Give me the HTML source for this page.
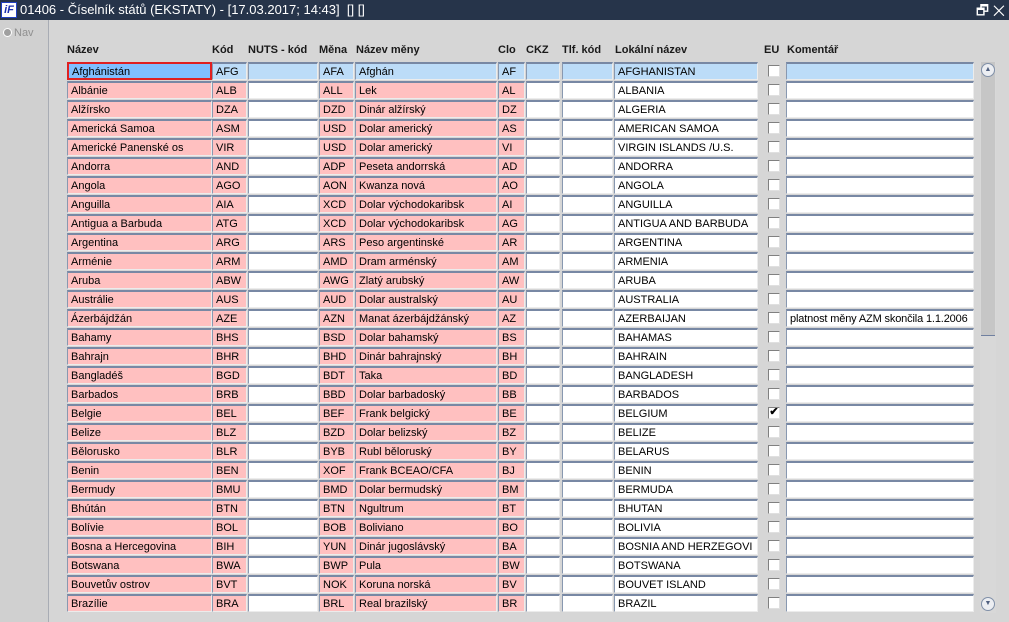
<!DOCTYPE html>
<html><head><meta charset="utf-8"><style>
*{box-sizing:border-box;margin:0;padding:0}
body{width:1009px;height:622px;overflow:hidden;background:#d6d6d6;font-family:"Liberation Sans",Arial,sans-serif;font-size:11px;color:#000;position:relative}
.tb{position:absolute;left:0;top:0;width:1009px;height:20px;background:#26344a;color:#fff;font-size:13px;line-height:20px;padding-left:20px;white-space:nowrap}
.logo{position:absolute;left:1px;top:2px;width:16px;height:16px;background:#fff;border:1px solid #2040c0;color:#1a2fb0;font-weight:bold;font-style:italic;font-size:11px;line-height:14px;text-align:center}
.side{position:absolute;left:0;top:20px;width:49px;height:602px;background:#d0d0d0;border-right:1px solid #a8acb4}
.nav{position:absolute;left:3px;top:27px;color:#909090;font-size:11px}
.nav i{display:inline-block;width:9px;height:9px;border-radius:50%;background:#a0a0a0;border:1px solid #fff;vertical-align:-1px;margin-right:2px}
.h{position:absolute;top:44px;font-weight:bold;font-size:11px;color:#1a1a1a}
.r{position:absolute;left:0;height:18px;width:1000px}
.r span{position:absolute;top:0;height:18px;line-height:16px;padding-left:3px;white-space:nowrap;overflow:hidden;background:#fff;border-top:2px solid #7888a4;border-left:1px solid #8898b0;border-bottom:1px solid #ececec;border-right:1px solid #ececec}
.r .p{background:#ffc0c0}
.a{left:67px;width:145px}.b{left:212px;width:35px}.c{left:248px;width:70px}.d{left:319px;width:35px}.e{left:355px;width:142px}.f{left:498px;width:27px}.g{left:526px;width:34px}.hh{left:562px;width:51px}.i{left:614px;width:144px}.k{left:786px;width:188px;letter-spacing:-0.15px}
.r .j{left:768px;top:3px;width:12px;height:12px;padding:0;background:#fff;border:1px solid #808080;border-right-color:#e0e0e0;border-bottom-color:#e0e0e0;font-size:11px;line-height:9px;text-align:center;font-weight:bold}
.r0 span{background:#bcdcf8}
.r0 .a{background:#80bfff;border:2px solid #e02020}
.sb{position:absolute;left:980px;top:62px;width:16px;height:551px;background:#d8d8d8}
.th{position:absolute;left:981px;top:62px;width:14px;height:274px;background:#c6c6c6;border-bottom:1px solid #7080a0}
.ar{position:absolute;left:981px;width:14px;height:14px;border-radius:7px;border:1px solid #8090a8;background:#eceef2;font-size:7px;line-height:12px;text-align:center;color:#506080}
</style></head><body>
<div class="tb"><div class="logo">iF</div>01406 - Číselník států (EKSTATY) - [17.03.2017; 14:43]&nbsp; [] []<span style="position:absolute;right:4px;top:0;font-size:14px">🗗 ✕</span></div>
<div class="side"></div>
<div class="nav"><i></i>Nav</div>
<div class="h" style="left:67px">Název</div><div class="h" style="left:212px">Kód</div><div class="h" style="left:248px">NUTS - kód</div><div class="h" style="left:319px">Měna</div><div class="h" style="left:356px">Název měny</div><div class="h" style="left:498px">Clo</div><div class="h" style="left:526px">CKZ</div><div class="h" style="left:562px">Tlf. kód</div><div class="h" style="left:615px">Lokální název</div><div class="h" style="left:764px">EU</div><div class="h" style="left:787px">Komentář</div>

<div class="r r0" style="top:62px"><span class="a">Afghánistán</span><span class="b">AFG</span><span class="c"></span><span class="d">AFA</span><span class="e">Afghán</span><span class="f">AF</span><span class="g"></span><span class="hh"></span><span class="i">AFGHANISTAN</span><span class="j"></span><span class="k"></span></div>
<div class="r" style="top:81px"><span class="a p">Albánie</span><span class="b p">ALB</span><span class="c"></span><span class="d p">ALL</span><span class="e p">Lek</span><span class="f p">AL</span><span class="g"></span><span class="hh"></span><span class="i">ALBANIA</span><span class="j"></span><span class="k"></span></div>
<div class="r" style="top:100px"><span class="a p">Alžírsko</span><span class="b p">DZA</span><span class="c"></span><span class="d p">DZD</span><span class="e p">Dinár alžírský</span><span class="f p">DZ</span><span class="g"></span><span class="hh"></span><span class="i">ALGERIA</span><span class="j"></span><span class="k"></span></div>
<div class="r" style="top:119px"><span class="a p">Americká Samoa</span><span class="b p">ASM</span><span class="c"></span><span class="d p">USD</span><span class="e p">Dolar americký</span><span class="f p">AS</span><span class="g"></span><span class="hh"></span><span class="i">AMERICAN SAMOA</span><span class="j"></span><span class="k"></span></div>
<div class="r" style="top:138px"><span class="a p">Americké Panenské os</span><span class="b p">VIR</span><span class="c"></span><span class="d p">USD</span><span class="e p">Dolar americký</span><span class="f p">VI</span><span class="g"></span><span class="hh"></span><span class="i">VIRGIN ISLANDS /U.S.</span><span class="j"></span><span class="k"></span></div>
<div class="r" style="top:157px"><span class="a p">Andorra</span><span class="b p">AND</span><span class="c"></span><span class="d p">ADP</span><span class="e p">Peseta andorrská</span><span class="f p">AD</span><span class="g"></span><span class="hh"></span><span class="i">ANDORRA</span><span class="j"></span><span class="k"></span></div>
<div class="r" style="top:176px"><span class="a p">Angola</span><span class="b p">AGO</span><span class="c"></span><span class="d p">AON</span><span class="e p">Kwanza nová</span><span class="f p">AO</span><span class="g"></span><span class="hh"></span><span class="i">ANGOLA</span><span class="j"></span><span class="k"></span></div>
<div class="r" style="top:195px"><span class="a p">Anguilla</span><span class="b p">AIA</span><span class="c"></span><span class="d p">XCD</span><span class="e p">Dolar východokaribsk</span><span class="f p">AI</span><span class="g"></span><span class="hh"></span><span class="i">ANGUILLA</span><span class="j"></span><span class="k"></span></div>
<div class="r" style="top:214px"><span class="a p">Antigua a Barbuda</span><span class="b p">ATG</span><span class="c"></span><span class="d p">XCD</span><span class="e p">Dolar východokaribsk</span><span class="f p">AG</span><span class="g"></span><span class="hh"></span><span class="i">ANTIGUA AND BARBUDA</span><span class="j"></span><span class="k"></span></div>
<div class="r" style="top:233px"><span class="a p">Argentina</span><span class="b p">ARG</span><span class="c"></span><span class="d p">ARS</span><span class="e p">Peso argentinské</span><span class="f p">AR</span><span class="g"></span><span class="hh"></span><span class="i">ARGENTINA</span><span class="j"></span><span class="k"></span></div>
<div class="r" style="top:252px"><span class="a p">Arménie</span><span class="b p">ARM</span><span class="c"></span><span class="d p">AMD</span><span class="e p">Dram arménský</span><span class="f p">AM</span><span class="g"></span><span class="hh"></span><span class="i">ARMENIA</span><span class="j"></span><span class="k"></span></div>
<div class="r" style="top:271px"><span class="a p">Aruba</span><span class="b p">ABW</span><span class="c"></span><span class="d p">AWG</span><span class="e p">Zlatý arubský</span><span class="f p">AW</span><span class="g"></span><span class="hh"></span><span class="i">ARUBA</span><span class="j"></span><span class="k"></span></div>
<div class="r" style="top:290px"><span class="a p">Austrálie</span><span class="b p">AUS</span><span class="c"></span><span class="d p">AUD</span><span class="e p">Dolar australský</span><span class="f p">AU</span><span class="g"></span><span class="hh"></span><span class="i">AUSTRALIA</span><span class="j"></span><span class="k"></span></div>
<div class="r" style="top:309px"><span class="a p">Ázerbájdžán</span><span class="b p">AZE</span><span class="c"></span><span class="d p">AZN</span><span class="e p">Manat ázerbájdžánský</span><span class="f p">AZ</span><span class="g"></span><span class="hh"></span><span class="i">AZERBAIJAN</span><span class="j"></span><span class="k">platnost měny AZM skončila 1.1.2006</span></div>
<div class="r" style="top:328px"><span class="a p">Bahamy</span><span class="b p">BHS</span><span class="c"></span><span class="d p">BSD</span><span class="e p">Dolar bahamský</span><span class="f p">BS</span><span class="g"></span><span class="hh"></span><span class="i">BAHAMAS</span><span class="j"></span><span class="k"></span></div>
<div class="r" style="top:347px"><span class="a p">Bahrajn</span><span class="b p">BHR</span><span class="c"></span><span class="d p">BHD</span><span class="e p">Dinár bahrajnský</span><span class="f p">BH</span><span class="g"></span><span class="hh"></span><span class="i">BAHRAIN</span><span class="j"></span><span class="k"></span></div>
<div class="r" style="top:366px"><span class="a p">Bangladéš</span><span class="b p">BGD</span><span class="c"></span><span class="d p">BDT</span><span class="e p">Taka</span><span class="f p">BD</span><span class="g"></span><span class="hh"></span><span class="i">BANGLADESH</span><span class="j"></span><span class="k"></span></div>
<div class="r" style="top:385px"><span class="a p">Barbados</span><span class="b p">BRB</span><span class="c"></span><span class="d p">BBD</span><span class="e p">Dolar barbadoský</span><span class="f p">BB</span><span class="g"></span><span class="hh"></span><span class="i">BARBADOS</span><span class="j"></span><span class="k"></span></div>
<div class="r" style="top:404px"><span class="a p">Belgie</span><span class="b p">BEL</span><span class="c"></span><span class="d p">BEF</span><span class="e p">Frank belgický</span><span class="f p">BE</span><span class="g"></span><span class="hh"></span><span class="i">BELGIUM</span><span class="j">✔</span><span class="k"></span></div>
<div class="r" style="top:423px"><span class="a p">Belize</span><span class="b p">BLZ</span><span class="c"></span><span class="d p">BZD</span><span class="e p">Dolar belizský</span><span class="f p">BZ</span><span class="g"></span><span class="hh"></span><span class="i">BELIZE</span><span class="j"></span><span class="k"></span></div>
<div class="r" style="top:442px"><span class="a p">Bělorusko</span><span class="b p">BLR</span><span class="c"></span><span class="d p">BYB</span><span class="e p">Rubl běloruský</span><span class="f p">BY</span><span class="g"></span><span class="hh"></span><span class="i">BELARUS</span><span class="j"></span><span class="k"></span></div>
<div class="r" style="top:461px"><span class="a p">Benin</span><span class="b p">BEN</span><span class="c"></span><span class="d p">XOF</span><span class="e p">Frank BCEAO/CFA</span><span class="f p">BJ</span><span class="g"></span><span class="hh"></span><span class="i">BENIN</span><span class="j"></span><span class="k"></span></div>
<div class="r" style="top:480px"><span class="a p">Bermudy</span><span class="b p">BMU</span><span class="c"></span><span class="d p">BMD</span><span class="e p">Dolar bermudský</span><span class="f p">BM</span><span class="g"></span><span class="hh"></span><span class="i">BERMUDA</span><span class="j"></span><span class="k"></span></div>
<div class="r" style="top:499px"><span class="a p">Bhútán</span><span class="b p">BTN</span><span class="c"></span><span class="d p">BTN</span><span class="e p">Ngultrum</span><span class="f p">BT</span><span class="g"></span><span class="hh"></span><span class="i">BHUTAN</span><span class="j"></span><span class="k"></span></div>
<div class="r" style="top:518px"><span class="a p">Bolívie</span><span class="b p">BOL</span><span class="c"></span><span class="d p">BOB</span><span class="e p">Boliviano</span><span class="f p">BO</span><span class="g"></span><span class="hh"></span><span class="i">BOLIVIA</span><span class="j"></span><span class="k"></span></div>
<div class="r" style="top:537px"><span class="a p">Bosna a Hercegovina</span><span class="b p">BIH</span><span class="c"></span><span class="d p">YUN</span><span class="e p">Dinár jugoslávský</span><span class="f p">BA</span><span class="g"></span><span class="hh"></span><span class="i">BOSNIA AND HERZEGOVI</span><span class="j"></span><span class="k"></span></div>
<div class="r" style="top:556px"><span class="a p">Botswana</span><span class="b p">BWA</span><span class="c"></span><span class="d p">BWP</span><span class="e p">Pula</span><span class="f p">BW</span><span class="g"></span><span class="hh"></span><span class="i">BOTSWANA</span><span class="j"></span><span class="k"></span></div>
<div class="r" style="top:575px"><span class="a p">Bouvetův ostrov</span><span class="b p">BVT</span><span class="c"></span><span class="d p">NOK</span><span class="e p">Koruna norská</span><span class="f p">BV</span><span class="g"></span><span class="hh"></span><span class="i">BOUVET ISLAND</span><span class="j"></span><span class="k"></span></div>
<div class="r" style="top:594px"><span class="a p">Brazílie</span><span class="b p">BRA</span><span class="c"></span><span class="d p">BRL</span><span class="e p">Real brazilský</span><span class="f p">BR</span><span class="g"></span><span class="hh"></span><span class="i">BRAZIL</span><span class="j"></span><span class="k"></span></div>

<div class="sb"></div><div class="th"></div>
<div class="ar" style="top:63px">▲</div>
<div class="ar" style="top:597px">▼</div>
</body></html>
